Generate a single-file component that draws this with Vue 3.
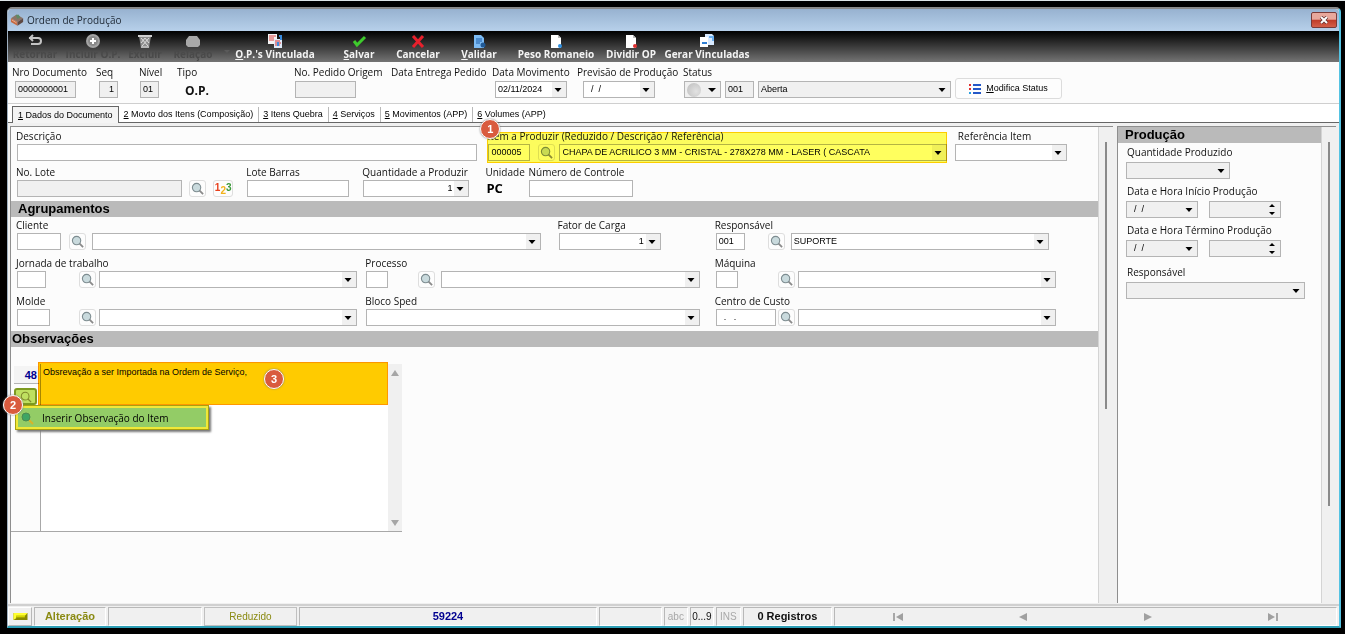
<script setup>
import { ref } from 'vue'

const tools = [
  { id: 'retornar', label: 'Retornar', off: true },
  { id: 'incluir', label: 'Incluir O.P.', off: true },
  { id: 'excluir', label: 'Excluir', off: true },
  { id: 'relacao', label: 'Relação', off: true },
  { id: 'vinculada', key: 'O', label: ".P.'s Vinculada" },
  { id: 'salvar', key: 'S', label: 'alvar' },
  { id: 'cancelar', label: 'Cancelar' },
  { id: 'validar', key: 'V', label: 'alidar' },
  { id: 'peso', label: 'Peso Romaneio' },
  { id: 'dividir', label: 'Dividir OP' },
  { id: 'gerar', label: 'Gerar Vinculadas' }
]

const tabs = [
  { key: '1', label: 'Dados do Documento' },
  { key: '2', label: 'Movto dos Itens (Composição)' },
  { key: '3', label: 'Itens Quebra' },
  { key: '4', label: 'Serviços' },
  { key: '5', label: 'Movimentos (APP)' },
  { key: '6', label: 'Volumes (APP)' }
]
const activeTab = ref('1')

const blocks = [
  {
    rows: [
      {
        name: 'r-item',
        fields: [
          { id: 'descricao', label: 'Descrição', parts: [{ kind: 'text', size: 'fill' }] },
          {
            id: 'item',
            label: 'Item a Produzir (Reduzido / Descrição / Referência)',
            mark: true,
            parts: [
              { kind: 'text', size: 'w42', slot: 's50', value: '000005' },
              { kind: 'find' },
              { kind: 'select', value: 'CHAPA DE ACRILICO  3 MM - CRISTAL - 278X278 MM - LASER ( CASCATA' }
            ]
          },
          { id: 'referencia', label: 'Referência Item', parts: [{ kind: 'select' }] }
        ]
      },
      {
        name: 'r-lote',
        fields: [
          {
            id: 'lote',
            label: 'No. Lote',
            parts: [{ kind: 'text', size: 'fill', ro: true }, { kind: 'find' }, { kind: 'numbers' }]
          },
          { id: 'barras', label: 'Lote Barras', parts: [{ kind: 'text', size: 'fill' }] },
          { id: 'quantidade', label: 'Quantidade a Produzir', parts: [{ kind: 'select', right: true, value: '1' }] },
          { id: 'unidade', label: 'Unidade', parts: [{ kind: 'output', value: 'PC' }] },
          { id: 'controle', label: 'Número de Controle', parts: [{ kind: 'text', size: 'fill' }] }
        ]
      }
    ]
  },
  {
    title: 'Agrupamentos',
    rows: [
      {
        name: 'r-cliente',
        fields: [
          {
            id: 'cliente',
            label: 'Cliente',
            parts: [{ kind: 'text', size: 'w44', slot: 's52' }, { kind: 'find' }, { kind: 'select' }]
          },
          { id: 'fator', label: 'Fator de Carga', parts: [{ kind: 'select', right: true, value: '1' }] },
          {
            id: 'responsavel',
            label: 'Responsável',
            parts: [
              { kind: 'text', size: 'w29', slot: 's52', value: '001' },
              { kind: 'find' },
              { kind: 'select', value: 'SUPORTE' }
            ]
          }
        ]
      },
      {
        name: 'r-jornada',
        fields: [
          {
            id: 'jornada',
            label: 'Jornada de trabalho',
            parts: [{ kind: 'text', size: 'w29', slot: 's62' }, { kind: 'find' }, { kind: 'select' }]
          },
          {
            id: 'processo',
            label: 'Processo',
            parts: [{ kind: 'text', size: 'w22', slot: 's52' }, { kind: 'find' }, { kind: 'select' }]
          },
          {
            id: 'maquina',
            label: 'Máquina',
            parts: [{ kind: 'text', size: 'w22', slot: 's62' }, { kind: 'find' }, { kind: 'select' }]
          }
        ]
      },
      {
        name: 'r-molde',
        fields: [
          {
            id: 'molde',
            label: 'Molde',
            parts: [{ kind: 'text', size: 'w33', slot: 's62' }, { kind: 'find' }, { kind: 'select' }]
          },
          { id: 'bloco', label: 'Bloco Sped', parts: [{ kind: 'select' }] },
          {
            id: 'custo',
            label: 'Centro de Custo',
            parts: [{ kind: 'text', size: 'w60', slot: 's62', value: '  .   .' }, { kind: 'find' }, { kind: 'select' }]
          }
        ]
      }
    ]
  }
]

const observacao = ref('Obsrevação a ser Importada na Ordem de Serviço,')
</script>

<template>
  <div class="desktop">
    <div class="window">
      <header class="titlebar">
        <svg class="app-icon" viewBox="0 0 16 14" aria-hidden="true">
          <path d="M1 5 7 1l7 4-6 4z" fill="#8a7468" />
          <path d="M1 5l7 4v4L1 9z" fill="#c56a42" />
          <path d="M8 9l6-4v4l-6 4z" fill="#5f4a44" />
          <path d="M6 2l3-1 2 3-3 2z" fill="#5d8a66" />
          <path d="M2 7l5 3" stroke="#f0b090" />
        </svg>
        <h1>Ordem de Produção</h1>
        <button class="close" type="button" aria-label="Fechar">
          <svg viewBox="0 0 10 8"><path d="M2 1l6 6M8 1L2 7" stroke="#5c3030" stroke-width="3.4" /><path d="M2 1l6 6M8 1L2 7" stroke="#fff" stroke-width="2" /></svg>
        </button>
      </header>

      <nav class="toolbar">
        <button v-for="t in tools" :key="t.id" type="button" :class="['tool', 't-' + t.id, { off: t.off }]" :disabled="t.off">
          <svg viewBox="0 0 16 14" aria-hidden="true">
            <g v-if="t.id === 'retornar'" fill="none" stroke="#c4c4c4" stroke-width="2">
              <path d="M2 4h9a3 3 0 0 1 0 6H4" /><path d="M6 1L3 4l3 3" />
            </g>
            <g v-else-if="t.id === 'incluir'">
              <circle cx="8" cy="7" r="7" fill="#a4a4a4" /><circle cx="8" cy="7" r="5" fill="#8a8a8a" />
              <path d="M8 4v6M5 7h6" stroke="#fff" stroke-width="2" />
            </g>
            <g v-else-if="t.id === 'excluir'">
              <path d="M2 2h12l-2 12H4z" fill="#8c8c8c" />
              <path d="M1 2h14" stroke="#d0d0d0" stroke-width="2" />
              <path d="M4 4l7 8M8 4l4 5M12 4l-7 8M8 4l-4 5M4 13h8" stroke="#dedede" />
            </g>
            <path v-else-if="t.id === 'relacao'" d="M4 2h8l3 4v5l-2 2H3l-2-2V6z" fill="#a8a8a8" />
            <g v-else-if="t.id === 'vinculada'">
              <path d="M1 0h9v10H1z" fill="#f4f4f4" /><path d="M2 2h7M2 4h5M2 6h5" stroke="#d44" />
              <path d="M7 5h8v9H7z" fill="#dfeaf8" /><path d="M8 7h5M8 9h6M8 11h5" stroke="#d33" />
              <path d="M12 2h2v4M11 12V8" stroke="#3b8de0" stroke-width="2" fill="none" />
            </g>
            <path v-else-if="t.id === 'salvar'" d="M3 7l3 4L14 3" fill="none" stroke="#3ecb2c" stroke-width="3" />
            <path v-else-if="t.id === 'cancelar'" d="M3 2l10 11M13 2L3 13" stroke="#e8202c" stroke-width="3" />
            <g v-else-if="t.id === 'validar'">
              <path d="M3 1h7l3 3v10H3z" fill="#7dbcf5" /><path d="M5 5h6M5 7h6M5 9h4" stroke="#1c5ca8" />
              <circle cx="12" cy="11" r="2.500" fill="#215a96" />
            </g>
            <g v-else-if="t.id === 'peso'">
              <path d="M3 1h7l3 3v10H3z" fill="#fff" /><path d="M10 1v3h3z" fill="#bbb" />
              <circle cx="12" cy="12" r="2" fill="#2f8fe0" />
            </g>
            <g v-else-if="t.id === 'dividir'">
              <path d="M3 1h7l3 3v10H3z" fill="#fff" /><path d="M10 1v3h3z" fill="#bbb" />
              <circle cx="12" cy="12" r="2" fill="#e03030" />
            </g>
            <g v-else>
              <path d="M6 0h7l2 2v9H6z" fill="#d8eaff" /><path d="M1 3h8v10H1z" fill="#fff" />
              <path d="M3 9h5" stroke="#2f7fd4" stroke-width="2" /><path d="M10 3h4v4" stroke="#6cb0f0" stroke-width="2" fill="none" />
            </g>
          </svg>
          <span><u v-if="t.key">{{ t.key }}</u>{{ t.label }}</span>
          <svg v-if="t.id === 'relacao'" class="more" viewBox="0 0 8 4" aria-hidden="true"><path d="M0 0h8L4 4z" fill="#5a5a5a" /></svg>
        </button>
      </nav>

      <section class="docbar">
        <div class="field">
          <label for="nro">Nro Documento</label>
          <div class="line in3"><input id="nro" class="w61 gray" readonly value="0000000001" /></div>
        </div>
        <div class="field">
          <label for="seq">Seq</label>
          <div class="line in3"><input id="seq" class="w19 gray right" readonly value="1" /></div>
        </div>
        <div class="field">
          <label for="nivel">Nível</label>
          <div class="line"><input id="nivel" class="w19 gray" readonly value="01" /></div>
        </div>
        <div class="field">
          <label for="tipo">Tipo</label>
          <output id="tipo" class="tipo">O.P.</output>
        </div>
        <div class="field">
          <label for="pedido">No. Pedido Origem</label>
          <div class="line"><input id="pedido" class="w61 gray" readonly /></div>
        </div>
        <div class="field"><span class="caption">Data Entrega Pedido</span></div>
        <div class="field">
          <label for="movimento">Data Movimento</label>
          <div class="line in3"><select id="movimento" class="w72"><option>02/11/2024</option></select></div>
        </div>
        <div class="field">
          <label for="previsao">Previsão de Produção</label>
          <div class="line in6"><select id="previsao" class="w72"><option>&nbsp; /&nbsp; /</option></select></div>
        </div>
        <div class="field">
          <label for="status">Status</label>
          <div class="line status">
            <button type="button" class="lamp" aria-label="Cor do status">
              <i></i><svg viewBox="0 0 8 4"><path d="M0 0h8L4 4z" /></svg>
            </button>
            <input class="w29 gray" readonly value="001" aria-label="Código do status" />
            <select id="status" class="gray fill"><option>Aberta</option></select>
          </div>
        </div>
        <button type="button" class="modifica">
          <svg viewBox="0 0 12 10" aria-hidden="true">
            <path d="M0 1h2M0 5h2" stroke="#e03030" stroke-width="2" /><path d="M0 9h2" stroke="#2a9fe0" stroke-width="2" />
            <path d="M4 1h8M4 5h8M4 9h8" stroke="#2458c8" stroke-width="2" />
          </svg>
          <span><u>M</u>odifica Status</span>
        </button>
      </section>

      <div class="tabs" role="tablist">
        <button
          v-for="t in tabs"
          :key="t.key"
          type="button"
          role="tab"
          :class="['tab', { on: activeTab === t.key }]"
          :aria-selected="activeTab === t.key"
          @click="activeTab = t.key"
        ><u>{{ t.key }}</u> {{ t.label }}</button>
      </div>

      <main class="work">
        <div class="pane left">
          <div class="body">
            <section v-for="(b, i) in blocks" :key="i" class="block">
              <h2 v-if="b.title">{{ b.title }}</h2>
              <div v-for="r in b.rows" :key="r.name" :class="['row', r.name]">
                <div v-for="f in r.fields" :key="f.id" :class="['field', 'f-' + f.id]">
                  <label :for="f.id">{{ f.label }}</label>
                  <div class="line">
                    <template v-for="(p, n) in f.parts" :key="n">
                      <span v-if="p.kind === 'text' && p.slot" :class="p.slot">
                        <input :id="f.id" :class="p.size" :value="p.value" />
                      </span>
                      <input v-else-if="p.kind === 'text'" :id="f.id" :class="[p.size, { gray: p.ro }]" :readonly="p.ro" />
                      <button v-else-if="p.kind === 'find'" type="button" class="mini" :aria-label="'Pesquisar ' + f.label">
                        <svg viewBox="0 0 14 14">
                          <path d="M9 9l4 4" stroke="#8a8a8a" stroke-width="2" />
                          <circle cx="6" cy="6" r="4.500" fill="#c9dadd" stroke="#7d8c90" stroke-width="1.200" />
                        </svg>
                      </button>
                      <button v-else-if="p.kind === 'numbers'" type="button" class="mini wide" aria-label="Gerar lote">
                        <b class="n1">1</b><b class="n2">2</b><b class="n3">3</b>
                      </button>
                      <output v-else-if="p.kind === 'output'" :id="f.id" class="unit">{{ p.value }}</output>
                      <select v-else :id="n ? f.id + '-desc' : f.id" :aria-label="f.label" :class="['fill', { right: p.right }]">
                        <option>{{ p.value }}</option>
                      </select>
                    </template>
                  </div>
                  <template v-if="f.mark">
                    <i class="mark"></i><b class="pin">1</b>
                  </template>
                </div>
              </div>
            </section>

            <section class="block notes">
              <h2 class="flush">Observações</h2>
              <div class="memo">
                <div class="gutter">
                  <output class="count">48</output>
                  <button type="button" class="obs-find" aria-label="Observações do item">
                    <svg viewBox="0 0 14 14" fill="none" stroke="#7f8a2c"><circle cx="6" cy="6" r="4.500" stroke-width="1.200" /><path d="M9 9l4 4" stroke-width="1.500" /></svg>
                  </button>
                </div>
                <textarea v-model="observacao" aria-label="Observações"></textarea>
                <div class="memo-scroll" aria-hidden="true">
                  <svg viewBox="0 0 8 6"><path d="M4 0l4 6H0z" fill="#a6a6a6" /></svg>
                  <svg viewBox="0 0 8 6"><path d="M4 6l4-6H0z" fill="#a6a6a6" /></svg>
                </div>
                <i class="note"></i>
                <b class="pin three">3</b>
                <button type="button" class="menu">
                  <svg viewBox="0 0 14 14"><path d="M9 9l4 4" stroke="#d8b428" stroke-width="2" /><circle cx="6" cy="6" r="4" fill="#3fa564" stroke="#4c8a50" /></svg>
                  Inserir Observação do Item
                </button>
                <b class="pin two">2</b>
              </div>
            </section>
          </div>
          <div class="scroll short"><i></i></div>
        </div>

        <aside class="pane side">
          <div class="body">
            <h2>Produção</h2>
            <div class="stack">
              <div class="field">
                <label for="qtd-prod">Quantidade Produzido</label>
                <div class="line"><select id="qtd-prod" class="gray w104"><option></option></select></div>
              </div>
              <div class="field">
                <label for="inicio">Data e Hora Início Produção</label>
                <div class="line pair">
                  <select id="inicio" class="gray w72"><option>&nbsp; /&nbsp; /</option></select>
                  <input class="gray spin w72" readonly aria-label="Hora início" />
                </div>
              </div>
              <div class="field">
                <label for="termino">Data e Hora Término Produção</label>
                <div class="line pair">
                  <select id="termino" class="gray w72"><option>&nbsp; /&nbsp; /</option></select>
                  <input class="gray spin w72" readonly aria-label="Hora término" />
                </div>
              </div>
              <div class="field last">
                <label for="resp-prod">Responsável</label>
                <div class="line"><select id="resp-prod" class="gray fill"><option></option></select></div>
              </div>
            </div>
          </div>
          <div class="scroll tall"><i></i></div>
        </aside>
      </main>

      <footer class="statusbar">
        <span class="led"><svg viewBox="0 0 16 8"><path d="M0 0h16v8H0z" fill="#8a8a00" /><path d="M0 0h16l-3 3H3v3l-3 2z" fill="#ffff30" /><path d="M3 3h10v2H3z" fill="#d6d600" /></svg></span>
        <span class="olive bold">Alteração</span>
        <span></span>
        <span class="olive raised">Reduzido</span>
        <span class="navy bold">59224</span>
        <span></span>
        <span class="dim">abc</span>
        <span>0...9</span>
        <span class="dim">INS</span>
        <span class="bold">0 Registros</span>
        <span class="nav">
          <button type="button" aria-label="Primeiro"><svg viewBox="0 0 10 8"><path d="M1 0v8" stroke="#909090" stroke-width="1.500" /><path d="M10 0v8L3 4z" fill="#a0a0a0" /></svg></button>
          <button type="button" aria-label="Anterior"><svg viewBox="0 0 10 8"><path d="M9 0v8L1 4z" fill="#a0a0a0" /></svg></button>
          <button type="button" aria-label="Próximo"><svg viewBox="0 0 10 8"><path d="M1 0v8l8-4z" fill="#a0a0a0" /></svg></button>
          <button type="button" aria-label="Último"><svg viewBox="0 0 10 8"><path d="M0 0v8l7-4z" fill="#a0a0a0" /><path d="M9 0v8" stroke="#909090" stroke-width="1.500" /></svg></button>
        </span>
      </footer>
    </div>
  </div>
</template>

<style>
body {
  background: #000;
}
</style>

<style scoped>
* {
  box-sizing: border-box;
}
.desktop {
  min-height: 100vh;
  display: flex;
  padding: 6px 4px 6px 7px;
  background: #000;
  border-top: 1px solid #dfe6e8;
  font: 10px/16px "Open Sans", "Noto Sans", sans-serif;
  color: #111;
}
.window {
  flex: 1;
  min-width: 0;
  display: flex;
  flex-direction: column;
  border: 1px solid #9fb0c0;
  border-top: 2px solid #8a8a8a;
  border-right: 2px solid #55c3e2;
  border-bottom: 2px solid #2f9fb6;
  border-radius: 5px 5px 0 0;
  background: #f0f0f0;
}
button,
input,
select,
textarea {
  font: 9px/13px "Liberation Sans", sans-serif;
  color: #000;
  margin: 0;
  border-radius: 0;
}
h1,
h2 {
  margin: 0;
}
.titlebar {
  height: 22px;
  display: flex;
  align-items: center;
  padding: 0 2px;
  background: linear-gradient(#97b2d0, #b7d0ea);
  border-radius: 4px 4px 0 0;
}
.titlebar h1 {
  flex: 1;
  font-size: 10px;
  font-weight: 400;
  color: #1d2733;
}
.app-icon {
  width: 15px;
  height: 14px;
  margin-right: 2px;
}
.close {
  width: 26px;
  height: 16px;
  padding: 0;
  display: grid;
  place-items: center;
  border: 1px solid #7a3b38;
  border-radius: 2px;
  background: linear-gradient(#e8a89c 0 45%, #bf3c28 50%, #d4604a);
}
.close svg {
  width: 10px;
  height: 8px;
}
.toolbar {
  height: 31px;
  display: flex;
  background: linear-gradient(#000, #747474);
}
.tool {
  position: relative;
  flex: none;
  padding: 3px 0 0;
  display: flex;
  flex-direction: column;
  align-items: center;
  border: 0;
  background: none;
  color: #f4f4f4;
  font: 700 10px/12px "Open Sans", "Noto Sans", sans-serif;
  white-space: nowrap;
}
.tool svg {
  width: 16px;
  height: 14px;
  flex: none;
}
.tool .more {
  position: absolute;
  right: -10px;
  top: 19px;
  width: 6px;
  height: 3px;
}
.tool.off {
  color: #4a4a4a;
}
.t-retornar { width: 54px; }
.t-incluir { width: 62px; }
.t-excluir { width: 42px; }
.t-relacao { width: 54px; }
.t-vinculada { width: 110px; }
.t-salvar { width: 58px; }
.t-cancelar { width: 60px; }
.t-validar { width: 62px; }
.t-peso { width: 92px; }
.t-dividir { width: 58px; }
.t-gerar { width: 94px; }

.docbar {
  display: grid;
  grid-template-columns: 84px 43px 38px 117px 97px 101px 85px 106px minmax(160px, 268px) auto;
  justify-content: start;
  height: 42px;
  padding: 2px 4px 0;
  background: #fcfcfc;
  border-bottom: 1px solid #cfcfcf;
}
.field {
  position: relative;
  min-width: 0;
}
label,
.caption {
  display: block;
  height: 16px;
  white-space: nowrap;
}
.line {
  display: flex;
  align-items: center;
  height: 17px;
  padding-left: 1px;
}
.docbar .line {
  margin-top: 1px;
}
.docbar .in3 { padding-left: 3px; }
.docbar .in6 { padding-left: 6px; }
input,
select {
  height: 17px;
  flex: none;
  padding: 0 3px 1px 2px;
  border: 1px solid #b4b4b4;
  background-color: #fff;
  outline: 0;
}
select {
  appearance: none;
  min-width: 0;
  padding-right: 16px;
  background-image: url("data:image/svg+xml,%3Csvg xmlns='http://www.w3.org/2000/svg' viewBox='0 0 8 4'%3E%3Cpath d='M.5 0h7L4 4z'/%3E%3C/svg%3E"), linear-gradient(#f0f0f0, #f0f0f0);
  background-size: 8px 4px, 14px 100%;
  background-position: right 4px center, right center;
  background-repeat: no-repeat;
}
.gray {
  background-color: #f0f0f0;
}
.right {
  text-align: right;
  text-align-last: right;
}
.fill {
  flex: 1;
  width: 0;
}
.w19 { width: 19px; }
.w22 { width: 22px; }
.w29 { width: 29px; }
.w33 { width: 33px; }
.w42 { width: 42px; }
.w44 { width: 44px; }
.w60 { width: 60px; }
.w61 { width: 61px; }
.w72 { width: 72px; }
.w104 { width: 104px; }
.s50 { width: 50px; }
.s52 { width: 52px; }
.s62 { width: 62px; }
.s50,
.s52,
.s62 {
  flex: none;
  display: flex;
}
.spin {
  background-image: url("data:image/svg+xml,%3Csvg xmlns='http://www.w3.org/2000/svg' viewBox='0 0 6 11'%3E%3Cpath d='M0 3l3-3 3 3zM0 8l3 3 3-3z'/%3E%3C/svg%3E");
  background-size: 6px 11px;
  background-position: right 5px center;
  background-repeat: no-repeat;
}
.tipo {
  display: block;
  padding: 2px 0 0 8px;
  font: 700 12px/18px "Open Sans", sans-serif;
}
.status {
  gap: 4px;
}
.status select {
  min-width: 90px;
}
.lamp {
  width: 37px;
  height: 17px;
  padding: 0 4px 0 2px;
  display: flex;
  align-items: center;
  justify-content: space-between;
  border: 1px solid #b4b4b4;
  background: #f0f0f0;
}
.lamp i {
  width: 14px;
  height: 14px;
  border-radius: 50%;
  background: radial-gradient(circle at 65% 60%, #e2e2e2, #bdbdbd);
}
.lamp svg {
  width: 8px;
  height: 4px;
}
.modifica {
  width: 107px;
  height: 21px;
  margin: 14px 0 0 4px;
  display: flex;
  align-items: center;
  justify-content: center;
  gap: 5px;
  border: 1px solid #dcdcdc;
  border-radius: 3px;
  background: #fdfdfd;
  white-space: nowrap;
}
.modifica svg {
  width: 12px;
  height: 10px;
}
.tabs {
  display: flex;
  align-items: flex-end;
  height: 19px;
  padding-left: 4px;
  background: #fff;
  border-bottom: 1px solid #666;
}
.tab {
  height: 15px;
  padding: 0 5px 0 4px;
  border: 0;
  border-left: 1px solid #b8b8b8;
  background: none;
  white-space: nowrap;
}
.tab.on {
  height: 17px;
  padding: 0 5px;
  border: 1px solid #666;
  border-bottom: 0;
  background: #f4f4f4;
  margin-bottom: -1px;
}
.tab.on + .tab {
  border-left-color: transparent;
}
.work {
  flex: 1;
  display: flex;
  gap: 4px;
  padding: 3px 3px 1px 2px;
}
.pane {
  display: flex;
  border: 1px solid #8e8e8e;
  border-width: 1px 0 0 1px;
  min-width: 0;
}
.left {
  flex: 1;
}
.left .body {
  padding-top: 1px;
}
.side {
  width: 219px;
  flex: none;
}
.body {
  flex: 1;
  min-width: 0;
  background: #fcfcfc;
}
.scroll {
  width: 15px;
  flex: none;
  padding: 15px 0 0 6px;
  border-left: 1px solid #d4d4d4;
  background: #f0f0f0;
}
.scroll i {
  display: block;
  width: 2px;
  background: #8a8a8a;
}
.short i { height: 58%; }
.tall i { height: 79%; }

h2 {
  height: 16px;
  padding-left: 7px;
  background: #bababa;
  color: #000;
  font: 700 13px/15px "Liberation Sans", sans-serif;
}
.flush {
  padding-left: 1px;
}
.block + .block {
  margin-top: 4px;
}
.block + .notes {
  margin-top: 5px;
}
.row {
  display: grid;
  padding-left: 5px;
}
.row + .row {
  margin-top: 5px;
}
.row + .r-lote {
  margin-top: 3px;
}
.r-item { grid-template-columns: 471fr 466fr 113fr 31fr; }
.r-lote { grid-template-columns: 230fr 116fr 123fr 43fr 104fr 465fr; }
.r-cliente { grid-template-columns: 541fr 157fr 334fr 49fr; }
.r-jornada,
.r-molde { grid-template-columns: 349fr 349fr 341fr 42fr; }
.f-descricao { padding-right: 10px; }
.f-item { padding-right: 7px; }
.f-lote,
.f-barras { padding-right: 13px; }
.f-quantidade { padding-right: 16px; }
.f-cliente { padding-right: 17px; }
.f-fator { padding-right: 54px; }
.f-jornada,
.f-molde { padding-right: 8px; }
.f-processo,
.f-bloco { padding-right: 15px; }
.f-referencia label { padding-left: 4px; }
.f-item .mini { margin-right: 4px; }
.f-lote .mini { margin-left: 7px; }
.f-cliente .mini,
.f-processo .mini,
.f-responsavel .mini { margin-right: 6px; }
.f-jornada .mini,
.f-molde .mini,
.f-maquina .mini,
.f-custo .mini { margin-right: 3px; }
.mini {
  flex: none;
  width: 17px;
  height: 17px;
  padding: 0;
  display: flex;
  align-items: center;
  justify-content: center;
  border: 1px solid #dedede;
  border-radius: 3px;
  background: #fdfdfd;
}
.mini svg {
  width: 13px;
  height: 13px;
}
.wide {
  width: 20px;
}
.wide b {
  font: 700 10px/9px "Liberation Sans", sans-serif;
}
.n1 { color: #e8401c; padding-bottom: 3px; }
.n2 { color: #f2b21a; padding-top: 4px; }
.n3 { color: #3c9a3a; padding-bottom: 2px; }
.unit {
  font: 700 13px/17px "Open Sans", sans-serif;
  color: #000;
}
.mark {
  position: absolute;
  inset: 4px 7px -2px 0;
  border: 1px solid #ffd000;
  background: #ffff5e;
  mix-blend-mode: multiply;
  pointer-events: none;
}
.pin {
  position: absolute;
  top: -9px;
  left: -7px;
  width: 20px;
  height: 20px;
  border: 1px solid #fff;
  border-radius: 50%;
  background: #d95b3e;
  box-shadow: 0 0 2px #777;
  color: #fff;
  font: 700 11px/18px "Liberation Sans", sans-serif;
  text-align: center;
}
.memo {
  position: relative;
  display: flex;
  width: 36%;
  height: 168px;
  margin-top: 17px;
  border-bottom: 1px solid #a8a8a8;
}
.gutter {
  width: 30px;
  flex: none;
  padding: 2px 1px 0 3px;
  border-right: 1px solid #a8a8a8;
}
.count {
  display: block;
  height: 18px;
  padding-right: 2px;
  border-bottom: 1px solid #b4b4b4;
  background: #f4f4f4;
  color: #000090;
  font: 700 11px/18px "Liberation Sans", sans-serif;
  text-align: right;
}
.obs-find {
  width: 23px;
  height: 17px;
  margin-top: 4px;
  padding: 0;
  display: grid;
  place-items: center;
  border: 2px solid #7d9a20;
  border-radius: 3px;
  background: #bfe060;
}
.obs-find svg {
  width: 12px;
  height: 12px;
}
textarea {
  flex: 1;
  min-width: 0;
  padding: 2px;
  border: 0;
  outline: 0;
  resize: none;
  overflow: hidden;
  background: #fff;
}
.memo-scroll {
  width: 14px;
  flex: none;
  display: flex;
  flex-direction: column;
  justify-content: space-between;
  align-items: center;
  padding: 6px 0 5px;
  background: #f0f0f0;
}
.memo-scroll svg {
  width: 8px;
  height: 6px;
}
.note {
  position: absolute;
  top: -2px;
  left: 27px;
  right: 14px;
  height: 43px;
  border: 1px solid #ff9800;
  background: #ffcb00;
  mix-blend-mode: multiply;
  pointer-events: none;
}
.three {
  top: 5px;
  left: 253px;
}
.two {
  top: 31px;
  left: -8px;
}
.menu {
  position: absolute;
  top: 41px;
  left: 4px;
  width: 194px;
  height: 25px;
  display: flex;
  align-items: center;
  gap: 8px;
  padding: 0 4px;
  border: 1px solid #a8a010;
  background: #93cc66;
  box-shadow: inset 0 0 0 2px #f0e838, 2px 2px 2px #777;
  font: 10px/14px "Open Sans", "Noto Sans", sans-serif;
  white-space: nowrap;
}
.menu svg {
  flex: none;
  width: 14px;
  height: 14px;
}
.stack {
  display: flex;
  flex-direction: column;
  gap: 4px;
  padding: 1px 16px 0 8px;
}
.stack label {
  height: 18px;
  padding-left: 1px;
}
.stack .line {
  padding-left: 0;
}
.stack .last {
  margin-top: 3px;
}
.pair {
  gap: 11px;
}
.statusbar {
  display: grid;
  grid-template-columns: 24px 72px 94px 93px minmax(0, 299fr) 63px 24px 24px 25px 89px minmax(0, 505fr);
  gap: 2px;
  height: 22px;
  padding: 1px 2px 1px 0;
  border-top: 2px solid #d0d0d0;
}
.statusbar > span {
  min-width: 0;
  border: 1px solid #fff;
  border-top-color: #b8b8b8;
  border-left-color: #b8b8b8;
  font: 10px/17px "Liberation Sans", sans-serif;
  text-align: center;
  white-space: nowrap;
}
.statusbar > .led {
  display: grid;
  place-items: center;
  border-color: #fff #b8b8b8 #b8b8b8 #fff;
}
.led svg {
  width: 15px;
  height: 7px;
}
.statusbar > .bold {
  font: 700 11px/17px "Liberation Sans", sans-serif;
}
.statusbar > .raised {
  border-color: #c0c0c0;
}
.statusbar > .olive { color: #8a8a12; }
.statusbar > .navy { color: #000090; }
.statusbar > .dim { color: #a8a8a8; }
.statusbar > .nav {
  display: flex;
}
.nav button {
  flex: 1;
  display: grid;
  place-items: center;
  padding: 0;
  border: 0;
  background: none;
}
.nav svg {
  width: 10px;
  height: 8px;
}
</style>
